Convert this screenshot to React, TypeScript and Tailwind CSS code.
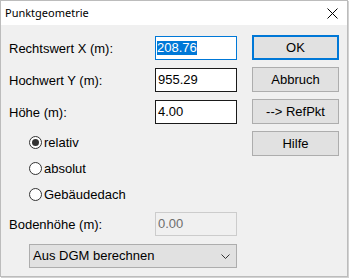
import React from "react";

const body = { fontFamily: '"Liberation Sans", Arial, sans-serif' };

function Radio({ checked, label }: { checked?: boolean; label: string }) {
  return (
    <div className="h-[26px] flex items-center pl-[20px]">
      <div className="w-[13px] h-[13px] rounded-full border border-[#333333] bg-white flex items-center justify-center">
        {checked && <div className="w-[7px] h-[7px] rounded-full bg-[#333333]" />}
      </div>
      <span className="ml-[2px] text-[13px] text-black leading-none">{label}</span>
    </div>
  );
}

function Field({ label, children }: { label: string; children: React.ReactNode }) {
  return (
    <div className="h-[24px] flex items-center justify-between">
      <span className="text-[13px] text-black leading-none">{label}</span>
      {children}
    </div>
  );
}

function Btn({ label, focus }: { label: string; focus?: boolean }) {
  return (
    <div
      className={
        "w-[87px] h-[25px] flex items-center justify-center bg-[#e1e1e1] text-[13px] text-black " +
        (focus ? "border-2 border-[#0078d7]" : "border border-[#adadad]")
      }
    >
      {label}
    </div>
  );
}

export default function App() {
  return (
    <div className="w-[350px] h-[279px] bg-white" style={body}>
      <div className="w-[348px] h-[277px] border border-[#bcbcbc] bg-[#f0f0f0] shadow-[1px_1px_0_#d2d2d2] flex flex-col">
        <div className="h-[24px] bg-white flex items-center justify-between pl-[4px] pr-[9px]">
          <span
            className="text-[11px] text-black"
            style={{ fontFamily: '"Noto Sans", "Open Sans", sans-serif' }}
          >
            Punktgeometrie
          </span>
          <svg width="11" height="11" viewBox="0 0 11 11">
            <path d="M0.5 0.5 L10.5 10.5 M10.5 0.5 L0.5 10.5" stroke="#000" strokeWidth="1" />
          </svg>
        </div>
        <div className="flex flex-row pt-[10px] pl-[8px]">
          <div className="w-[228px] pt-[1px] flex flex-col">
            <Field label="Rechtswert X (m):">
              <div className="w-[82px] h-[24px] border border-[#0078d7] bg-white flex items-center pl-[1px]">
                <span className="bg-[#0078d7] text-white text-[13px] leading-[14px] h-[14px]">208.76</span>
              </div>
            </Field>
            <div className="mt-[8px]">
              <Field label="Hochwert Y (m):">
                <div className="w-[82px] h-[24px] border border-[#1a1a1a] bg-white flex items-center pl-[2px] text-[13px] text-black">
                  955.29
                </div>
              </Field>
            </div>
            <div className="mt-[8px]">
              <Field label="Höhe (m):">
                <div className="w-[82px] h-[24px] border border-[#1a1a1a] bg-white flex items-center pl-[2px] text-[13px] text-black">
                  4.00
                </div>
              </Field>
            </div>
            <div className="mt-[5px] flex flex-col">
              <Radio checked label="relativ" />
              <Radio label="absolut" />
              <Radio label="Gebäudedach" />
            </div>
            <div className="mt-[5px]">
              <Field label="Bodenhöhe (m):">
                <div className="w-[82px] h-[24px] border border-[#cccccc] bg-[#f0f0f0] flex items-center pl-[2px] text-[13px] text-[#6d6d6d]">
                  0.00
                </div>
              </Field>
            </div>
            <div className="mt-[8px] ml-[20px] h-[24px] border border-[#adadad] bg-[#e1e1e1] flex items-center justify-between pl-[3px] pr-[6px]">
              <span className="text-[13px] text-black">Aus DGM berechnen</span>
              <svg width="9" height="5" viewBox="0 0 9 5">
                <path d="M0.5 0.5 L4.5 4.5 L8.5 0.5" stroke="#333" strokeWidth="1" fill="none" />
              </svg>
            </div>
          </div>
          <div className="ml-[15px] flex flex-col gap-[7px]">
            <Btn label="OK" focus />
            <Btn label="Abbruch" />
            <Btn label="--> RefPkt" />
            <Btn label="Hilfe" />
          </div>
        </div>
      </div>
    </div>
  );
}
